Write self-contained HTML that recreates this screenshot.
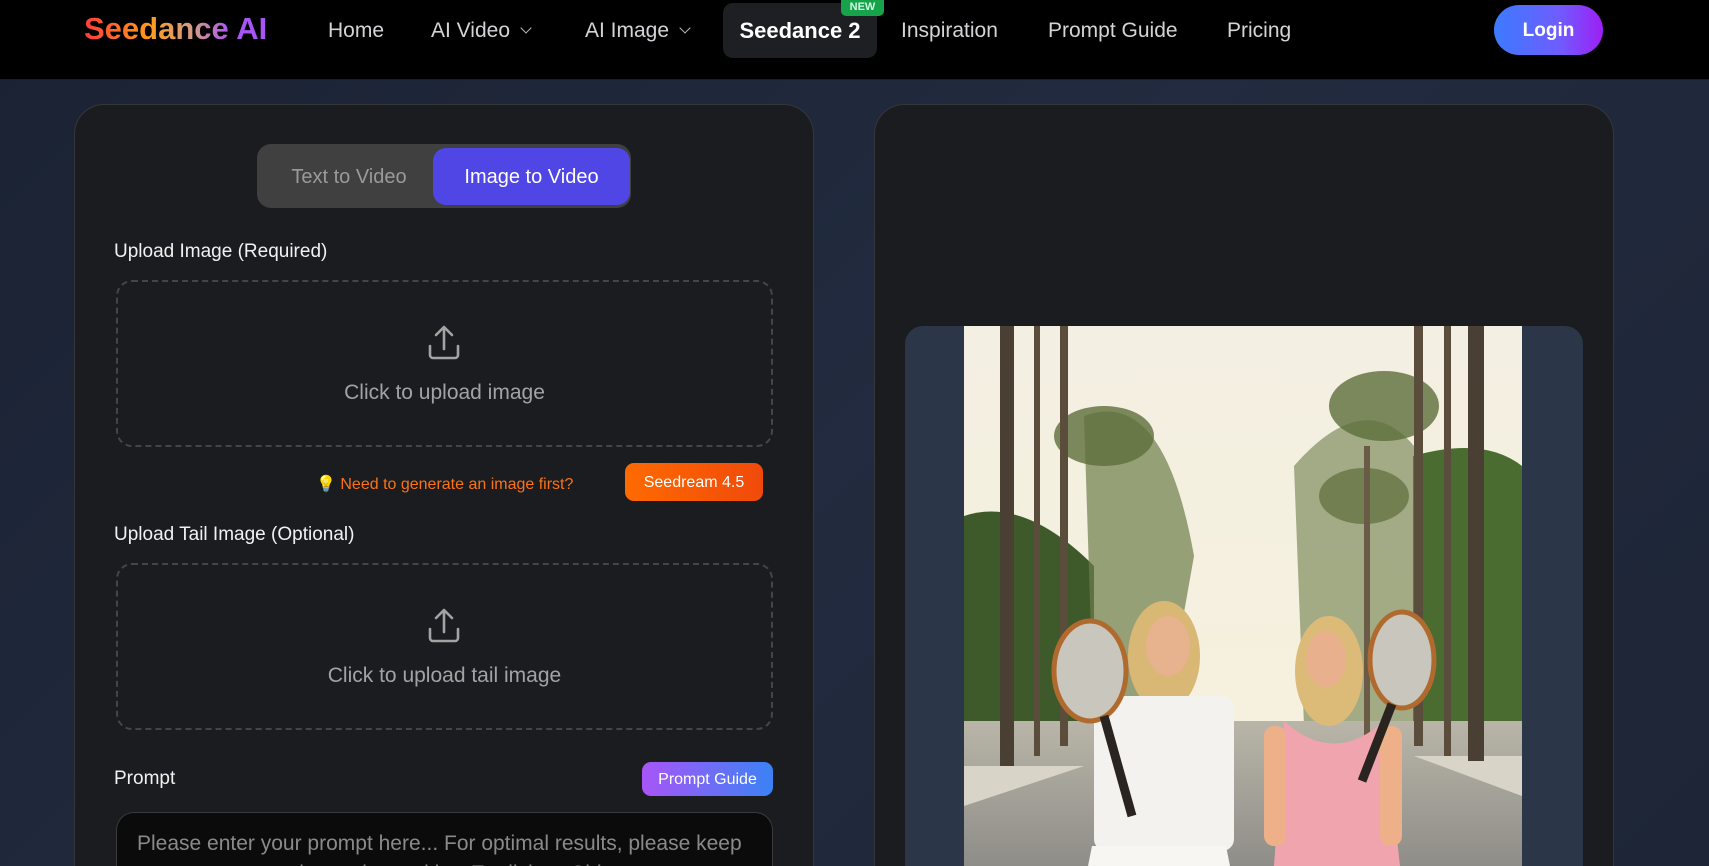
<!DOCTYPE html>
<html style="width:1709px;height:866px;overflow:hidden"><head><meta charset="utf-8"><style>
*{box-sizing:border-box;margin:0;padding:0}
html,body{width:1709px;height:866px;overflow:hidden}
body{font-family:"Liberation Sans",sans-serif;background:#1d2536}
#w{position:relative;width:1709px;height:866px;overflow:hidden;background:linear-gradient(135deg,#1a2233 0%,#222b3f 50%,#1d2536 100%)}
.hdr{position:absolute;left:0;top:0;width:1709px;height:80px;background:#000;border-bottom:1px solid #1a1f2a}
.logo{position:absolute;left:84px;top:11px;font-size:31px;font-weight:bold;background:linear-gradient(90deg,#ff3b3b,#ff9a1a 35%,#d59a8a 60%,#a855f7 80%);-webkit-background-clip:text;background-clip:text;color:transparent}
.nav{position:absolute;top:19px;font-size:21px;color:#d4d4d8}
.chev{display:inline-block;width:8px;height:8px;border-right:1.6px solid #bbb;border-bottom:1.6px solid #bbb;transform:rotate(45deg);margin-left:12px;position:relative;top:-5px}
.s2{position:absolute;left:723px;top:3px;width:154px;height:55px;background:#1e1f22;border-radius:10px;color:#fff;font-weight:bold;font-size:22px;text-align:center;line-height:55px}
.new{position:absolute;left:841px;top:0;width:43px;height:16px;background:#16a34a;border-radius:0 0 5px 5px;color:#d1fae5;font-size:11px;font-weight:bold;text-align:center;line-height:14px}
.login{position:absolute;left:1494px;top:5px;width:109px;height:50px;border-radius:25px;background:linear-gradient(90deg,#3b7bff,#6f5cff 60%,#9d1ff5);color:#fff;font-weight:bold;font-size:19px;text-align:center;line-height:52px}
.panel{position:absolute;top:104px;height:762px;background:#1b1c1f;border:1px solid #35363a;border-bottom:none;border-radius:30px 30px 0 0}
.tog{position:absolute;left:257px;top:144px;width:374px;height:64px;background:#404040;border-radius:14px}
.tog .a{position:absolute;left:176px;top:4px;width:197px;height:57px;background:#4f46e5;border-radius:13px;color:#fff;font-size:20px;text-align:center;line-height:59px}
.tog .b{position:absolute;left:4px;top:0;width:176px;height:64px;color:#9a9a9a;font-size:20px;text-align:center;line-height:66px}
.lbl{position:absolute;left:114px;color:#f1f1f1;font-size:19px}
.drop{position:absolute;left:116px;width:657px;height:167px;border:2px dashed #444549;border-radius:16px;text-align:center;color:#a3a3a3;font-size:21px}
.drop svg{position:absolute;left:308px;top:42px}
.drop span{position:absolute;left:0;right:0;top:99px}
.hint{position:absolute;left:316px;top:474px;color:#f97316;font-size:16px}
.sd{position:absolute;left:625px;top:463px;width:138px;height:38px;border-radius:9px;background:linear-gradient(90deg,#ff6a00,#f04a0a);color:#fff;font-size:16px;text-align:center;line-height:40px}
.pg{position:absolute;left:642px;top:762px;width:131px;height:34px;border-radius:9px;background:linear-gradient(90deg,#a855f7,#3b82f6);color:#fff;font-size:16px;text-align:center;line-height:35px}
.ta{position:absolute;left:116px;top:812px;width:657px;height:54px;background:#0b0b0c;border:1px solid #3a3a3e;border-bottom:none;border-radius:18px 18px 0 0;color:#8a8a8a;font-size:21px;padding:16px 20px 0;line-height:30px;white-space:nowrap;overflow:hidden}
.imgbox{position:absolute;left:905px;top:326px;width:678px;height:540px;background:#2c3649;border-radius:18px 18px 0 0;overflow:hidden}
</style></head><body><div id="w">
<div class="hdr">
<div class="logo">Seedance AI</div>
<div class="nav" style="left:328px">Home</div>
<div class="nav" style="left:431px">AI Video<span class="chev"></span></div>
<div class="nav" style="left:585px">AI Image<span class="chev"></span></div>
<div class="s2">Seedance 2</div><div class="new">NEW</div>
<div class="nav" style="left:901px">Inspiration</div>
<div class="nav" style="left:1048px">Prompt Guide</div>
<div class="nav" style="left:1227px">Pricing</div>
<div class="login">Login</div>
</div>
<div class="panel" style="left:74px;width:740px"></div>
<div class="panel" style="left:874px;width:740px"></div>
<div class="tog"><div class="b">Text to Video</div><div class="a">Image to Video</div></div>
<div class="lbl" style="top:241px">Upload Image (Required)</div>
<div class="drop" style="top:280px"><svg width="36" height="38" viewBox="0 0 36 38" fill="none" stroke="#a3a3a3" stroke-width="2.6" stroke-linecap="round" stroke-linejoin="round"><path d="M18 25V4M10 11l8-8 8 8M4 22v9a3 3 0 0 0 3 3h22a3 3 0 0 0 3-3v-9"/></svg><span>Click to upload image</span></div>
<div class="hint"><span style="color:#fcd34d">💡</span> Need to generate an image first?</div>
<div class="sd">Seedream 4.5</div>
<div class="lbl" style="top:524px">Upload Tail Image (Optional)</div>
<div class="drop" style="top:563px"><svg width="36" height="38" viewBox="0 0 36 38" fill="none" stroke="#a3a3a3" stroke-width="2.6" stroke-linecap="round" stroke-linejoin="round"><path d="M18 25V4M10 11l8-8 8 8M4 22v9a3 3 0 0 0 3 3h22a3 3 0 0 0 3-3v-9"/></svg><span>Click to upload tail image</span></div>
<div class="lbl" style="top:768px">Prompt</div>
<div class="pg">Prompt Guide</div>
<div class="ta">Please enter your prompt here... For optimal results, please keep<br>your prompt concise and use either English or Chinese.</div>
<div class="imgbox">
<svg style="position:absolute;left:59px;top:0" width="558" height="540" viewBox="0 0 558 540">
<defs><linearGradient id="sky" x1="0" y1="0" x2="0" y2="1"><stop offset="0" stop-color="#f3efe2"/><stop offset="1" stop-color="#f7f1dc"/></linearGradient>
<linearGradient id="rd" x1="0" y1="0" x2="0" y2="1"><stop offset="0" stop-color="#b9b5a8"/><stop offset="1" stop-color="#8e8d88"/></linearGradient></defs>
<rect width="558" height="540" fill="url(#sky)"/>
<path d="M0 190 Q60 170 130 240 L130 440 L0 440Z" fill="#3f5a2a"/>
<path d="M449 130 Q520 110 558 140 L558 435 L449 435Z" fill="#4a6c30"/>
<path d="M120 90 Q200 60 230 230 L200 400 L130 400Z" fill="#6d7d4a" opacity=".7"/>
<path d="M330 140 Q400 60 450 120 L450 400 L340 400Z" fill="#6d7d4a" opacity=".6"/>
<ellipse cx="140" cy="110" rx="50" ry="30" fill="#5c6e3a" opacity=".8"/>
<ellipse cx="420" cy="80" rx="55" ry="35" fill="#5c6e3a" opacity=".8"/>
<ellipse cx="400" cy="170" rx="45" ry="28" fill="#5c6e3a" opacity=".7"/>
<rect x="0" y="395" width="558" height="145" fill="url(#rd)"/>
<path d="M0 440 L120 440 L0 480Z" fill="#d8d4c8"/><path d="M450 430 L558 430 L558 470Z" fill="#d8d4c8"/>
<rect x="36" y="0" width="14" height="440" fill="#4a3f33"/><rect x="96" y="0" width="8" height="420" fill="#5a4d3c"/><rect x="70" y="0" width="6" height="430" fill="#5a4d3c"/>
<rect x="504" y="0" width="16" height="435" fill="#4a3f33"/><rect x="450" y="0" width="9" height="420" fill="#5a4d3c"/><rect x="480" y="0" width="7" height="430" fill="#5a4d3c"/><rect x="400" y="120" width="6" height="300" fill="#6a5b47"/>
<ellipse cx="200" cy="330" rx="36" ry="55" fill="#d9b774"/>
<rect x="130" y="370" width="140" height="155" rx="12" fill="#f4f2ee"/>
<path d="M128 520 L262 520 L266 540 L124 540Z" fill="#f7f6f2"/>
<ellipse cx="204" cy="320" rx="22" ry="30" fill="#e7b38e"/>
<ellipse cx="365" cy="345" rx="34" ry="55" fill="#dcbb78"/>
<ellipse cx="362" cy="333" rx="20" ry="28" fill="#e9b08d"/>
<path d="M320 395 Q370 440 420 395 L436 540 L310 540Z" fill="#f0a4ad"/>
<rect x="300" y="400" width="22" height="120" rx="10" fill="#eeb089"/><rect x="416" y="400" width="22" height="120" rx="10" fill="#eeb089"/>
<ellipse cx="126" cy="345" rx="36" ry="50" fill="#c9c6be" stroke="#b06a2e" stroke-width="5"/>
<path d="M140 390 L168 490" stroke="#2a2420" stroke-width="9"/>
<ellipse cx="438" cy="334" rx="32" ry="48" fill="#c9c6be" stroke="#b06a2e" stroke-width="5"/>
<path d="M428 378 L398 455" stroke="#2a2420" stroke-width="9"/>
</svg>
</div>
</div></body></html>
